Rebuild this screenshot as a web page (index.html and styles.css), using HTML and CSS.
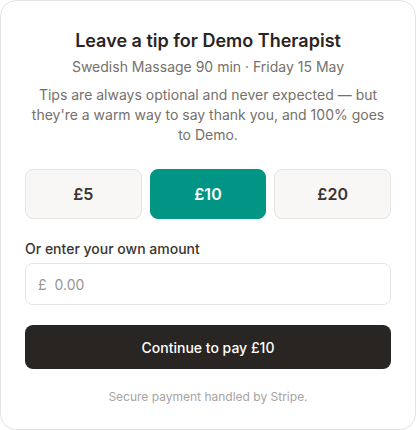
FILE: index.html
```html
<!DOCTYPE html>
<html lang="en">
<head>
<meta charset="utf-8">
<link rel="stylesheet" href="styles.css">
</head>
<body>
<div class="card">
  <h1 class="title">Leave a tip for Demo Therapist</h1>
  <p class="meta">Swedish Massage 90 min · Friday 15 May</p>
  <p class="intro">Tips are always optional and never expected — but they're a warm way to say thank you, and 100% goes to Demo.</p>
  <div class="amounts">
    <button class="amount">£5</button>
    <button class="amount selected">£10</button>
    <button class="amount">£20</button>
  </div>
  <label class="label" for="custom">Or enter your own amount</label>
  <div class="input">
    <span class="currency">£</span>
    <input id="custom" class="field" type="text" placeholder="0.00">
  </div>
  <button class="pay">Continue to pay £10</button>
  <p class="footer">Secure payment handled by Stripe.</p>
</div>
</body>
</html>
```
FILE: styles.css
```css
* { box-sizing: border-box; }
html, body { margin: 0; padding: 0; background: #ffffff; }
body { font-family: Inter, "Noto Sans", sans-serif; color: #2a2523; }
.card {
  width: 416px;
  height: 430px;
  border: 1px solid #e6e4e1;
  border-radius: 16px;
  background: #fff;
  padding: 28px 24px 24px;
  display: flex;
  flex-direction: column;
}
.title {
  margin: 0;
  font-size: 18px;
  line-height: 24px;
  font-weight: 600;
  text-align: center;
  color: #2a2523;
}
.meta {
  margin: 4px 0 0;
  font-size: 14px;
  line-height: 20px;
  text-align: center;
  color: #76706b;
}
.intro {
  margin: 8px 0 0;
  font-size: 14px;
  line-height: 20px;
  text-align: center;
  color: #76706b;
}
.amounts {
  margin-top: 24px;
  display: grid;
  grid-template-columns: 1fr 1fr 1fr;
  gap: 8px;
}
.amount {
  height: 50px;
  border: 1px solid #e6e4e1;
  border-radius: 8px;
  background: #f8f7f5;
  font-family: inherit;
  font-size: 16px;
  font-weight: 600;
  color: #3a3431;
}
.amount.selected {
  background: #019586;
  border-color: #019586;
  color: #fff;
}
.label {
  margin-top: 20px;
  font-size: 14px;
  line-height: 20px;
  font-weight: 500;
  color: #3a3431;
}
.input {
  margin-top: 4px;
  height: 42px;
  border: 1px solid #e6e4e1;
  border-radius: 8px;
  display: flex;
  align-items: center;
  padding: 0 12px;
  gap: 8px;
}
.currency { font-size: 14px; color: #9a9591; }
.field {
  flex: 1;
  border: 0;
  outline: none;
  padding: 0;
  font-family: inherit;
  font-size: 14px;
  color: #2a2523;
  background: transparent;
}
.field::placeholder { color: #9a9591; }
.pay {
  margin-top: 20px;
  height: 44px;
  border: 0;
  border-radius: 8px;
  background: #292523;
  color: #fff;
  font-family: inherit;
  font-size: 14px;
  font-weight: 500;
}
.footer {
  margin: 20px 0 0;
  font-size: 12px;
  line-height: 16px;
  text-align: center;
  color: #a8a39f;
}
```
